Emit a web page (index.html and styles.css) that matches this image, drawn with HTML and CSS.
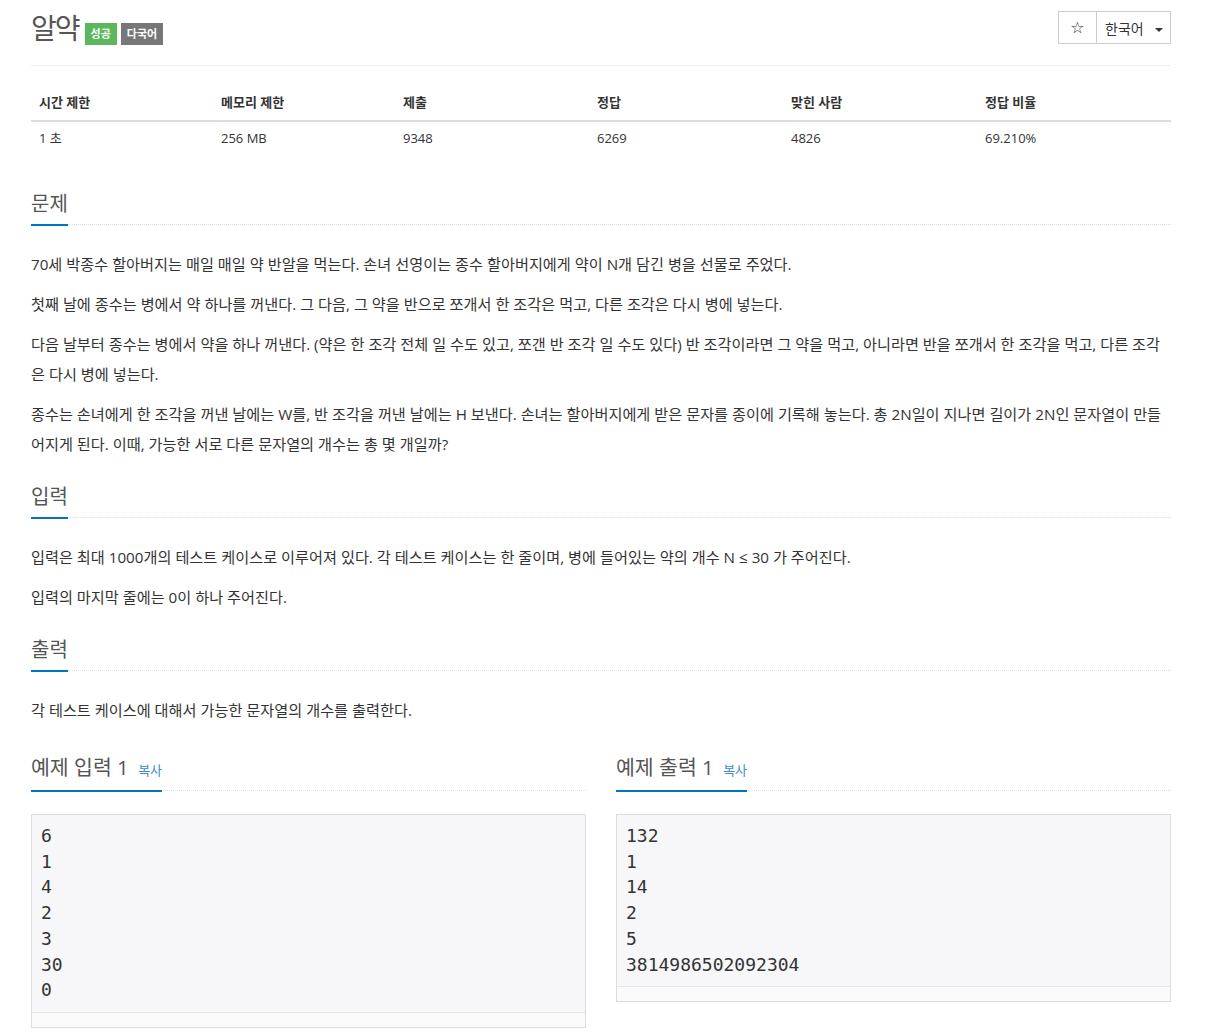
FILE: index.html
```html
<!DOCTYPE html>
<html lang="ko">
<head>
  <meta charset="UTF-8">
  <title>알약</title>
  <link rel="stylesheet" href="styles.css">
</head>
<body>

  <div class="container">

    <div class="page-header">
      <h1 class="title">
        <span class="title-text">알약</span>
        <span class="label label-success">성공</span>
        <span class="label label-default">다국어</span>
      </h1>
      <div class="btn-group">
        <button class="btn btn-star">☆</button>
        <button class="btn btn-lang">한국어 <span class="caret"></span></button>
      </div>
    </div>

    <table class="info-table">
      <thead>
        <tr>
          <th>시간 제한</th>
          <th>메모리 제한</th>
          <th>제출</th>
          <th>정답</th>
          <th>맞힌 사람</th>
          <th>정답 비율</th>
        </tr>
      </thead>
      <tbody>
        <tr>
          <td>1 초</td>
          <td>256 MB</td>
          <td>9348</td>
          <td>6269</td>
          <td>4826</td>
          <td>69.210%</td>
        </tr>
      </tbody>
    </table>

    <section class="problem-section">
      <div class="headline"><h2><span>문제</span></h2></div>
      <div class="problem-text">
        <p>70세 박종수 할아버지는 매일 매일 약 반알을 먹는다. 손녀 선영이는 종수 할아버지에게 약이 N개 담긴 병을 선물로 주었다.</p>
        <p>첫째 날에 종수는 병에서 약 하나를 꺼낸다. 그 다음, 그 약을 반으로 쪼개서 한 조각은 먹고, 다른 조각은 다시 병에 넣는다.</p>
        <p>다음 날부터 종수는 병에서 약을 하나 꺼낸다. (약은 한 조각 전체 일 수도 있고, 쪼갠 반 조각 일 수도 있다) 반 조각이라면 그 약을 먹고, 아니라면 반을 쪼개서 한 조각을 먹고, 다른 조각은 다시 병에 넣는다.</p>
        <p>종수는 손녀에게 한 조각을 꺼낸 날에는 W를, 반 조각을 꺼낸 날에는 H 보낸다. 손녀는 할아버지에게 받은 문자를 종이에 기록해 놓는다. 총 2N일이 지나면 길이가 2N인 문자열이 만들어지게 된다. 이때, 가능한 서로 다른 문자열의 개수는 총 몇 개일까?</p>
      </div>
    </section>

    <section class="problem-section">
      <div class="headline"><h2><span>입력</span></h2></div>
      <div class="problem-text">
        <p>입력은 최대 1000개의 테스트 케이스로 이루어져 있다. 각 테스트 케이스는 한 줄이며, 병에 들어있는 약의 개수 N ≤ 30 가 주어진다.</p>
        <p>입력의 마지막 줄에는 0이 하나 주어진다.</p>
      </div>
    </section>

    <section class="problem-section">
      <div class="headline"><h2><span>출력</span></h2></div>
      <div class="problem-text">
        <p>각 테스트 케이스에 대해서 가능한 문자열의 개수를 출력한다.</p>
      </div>
    </section>

    <div class="sample-row">
      <section class="sample">
        <div class="headline"><h2><span>예제 입력 1 <a class="copy-button">복사</a></span></h2></div>
        <div class="sample-box">
          <pre>6
1
4
2
3
30
0</pre>
          <div class="scroll-track"></div>
        </div>
      </section>
      <section class="sample">
        <div class="headline"><h2><span>예제 출력 1 <a class="copy-button">복사</a></span></h2></div>
        <div class="sample-box">
          <pre>132
1
14
2
5
3814986502092304</pre>
          <div class="scroll-track"></div>
        </div>
      </section>
    </div>

  </div>

</body>
</html>
```

FILE: styles.css
```css
body {
  font-family: 'Open Sans', 'Noto Sans CJK KR', sans-serif;
  color: #333;
  background-color: #fff;
  margin: 0;
  font-size: 14px;
}

.container {
  padding: 0 35px 0 31px;
}

/* header */
.page-header {
  display: flex;
  justify-content: space-between;
  align-items: flex-start;
  padding: 11px 0 20px;
  border-bottom: 1px solid #eee;
}

.title {
  display: flex;
  align-items: flex-end;
  margin: 0;
  height: 34px;
  font-weight: normal;
}

.title-text {
  font-size: 28px;
  line-height: 34px;
  color: #555;
  letter-spacing: -2px;
  margin-right: 6px;
}

.label {
  display: inline-block;
  height: 22px;
  line-height: 22px;
  padding: 0 6px;
  font-size: 11px;
  font-weight: bold;
  color: #fff;
  margin-right: 4px;
}

.label-success {
  background-color: #5cb85c;
}

.label-default {
  background-color: #777;
}

.btn-group {
  display: flex;
  border: 1px solid #ccc;
  height: 31px;
}

.btn {
  font-family: inherit;
  background-color: #fff;
  border: none;
  color: #333;
  font-size: 14px;
  padding: 0;
  height: 31px;
  cursor: pointer;
}

.btn-star {
  width: 38px;
  border-right: 1px solid #ccc;
  font-family: 'DejaVu Sans', sans-serif;
  font-size: 16px;
}

.btn-lang {
  width: 73px;
  text-align: left;
  padding-left: 8px;
}

.caret {
  display: inline-block;
  width: 0;
  height: 0;
  margin-left: 8px;
  vertical-align: middle;
  border-top: 4px solid #333;
  border-left: 4px solid transparent;
  border-right: 4px solid transparent;
}

/* info table */
.info-table {
  width: 100%;
  border-collapse: collapse;
  margin: 19px 0 34px;
  font-size: 13px;
  table-layout: fixed;
}

.info-table th {
  text-align: left;
  font-weight: bold;
  padding: 8px;
  line-height: 19px;
  border-bottom: 2px solid #ddd;
}

.info-table th:nth-child(1),
.info-table th:nth-child(2) {
  width: 166px;
}

.info-table th:nth-child(3),
.info-table th:nth-child(4),
.info-table th:nth-child(5) {
  width: 178px;
}

.info-table td {
  padding: 7px 8px 8px;
  line-height: 19px;
}

/* sections */
.problem-section {
  margin-top: 24px;
}

.headline {
  border-bottom: 1px dotted #ddd;
  margin-bottom: 24px;
}

.headline h2 {
  display: flex;
  margin: 0;
  font-weight: normal;
}

.headline h2 span {
  font-size: 20px;
  line-height: 28px;
  color: #555;
  padding-bottom: 6px;
  border-bottom: 2px solid #0076c0;
  margin-bottom: -2px;
}

.problem-text p {
  margin: 0 0 10px;
  font-size: 15.2px;
  line-height: 30px;
}

/* samples */
.sample-row {
  display: grid;
  grid-template-columns: 1fr 1fr;
  gap: 30px;
  margin-top: 28px;
}

.sample .headline {
  margin-bottom: 23px;
}

.sample .headline h2 span {
  font-size: 20.5px;
}

.copy-button {
  font-size: 13px;
  color: #428bca;
  margin-left: 4px;
}

.sample-box {
  background-color: #f7f7f9;
  border: 1px solid #ddd;
}

.sample-box pre {
  margin: 0;
  padding: 8px 9px 9px;
  font-family: 'DejaVu Sans Mono', monospace;
  font-size: 18px;
  line-height: 25.7px;
  color: #333;
}

.scroll-track {
  height: 14px;
  background-color: #fafafa;
  border-top: 1px solid #e6e6e6;
}
```
